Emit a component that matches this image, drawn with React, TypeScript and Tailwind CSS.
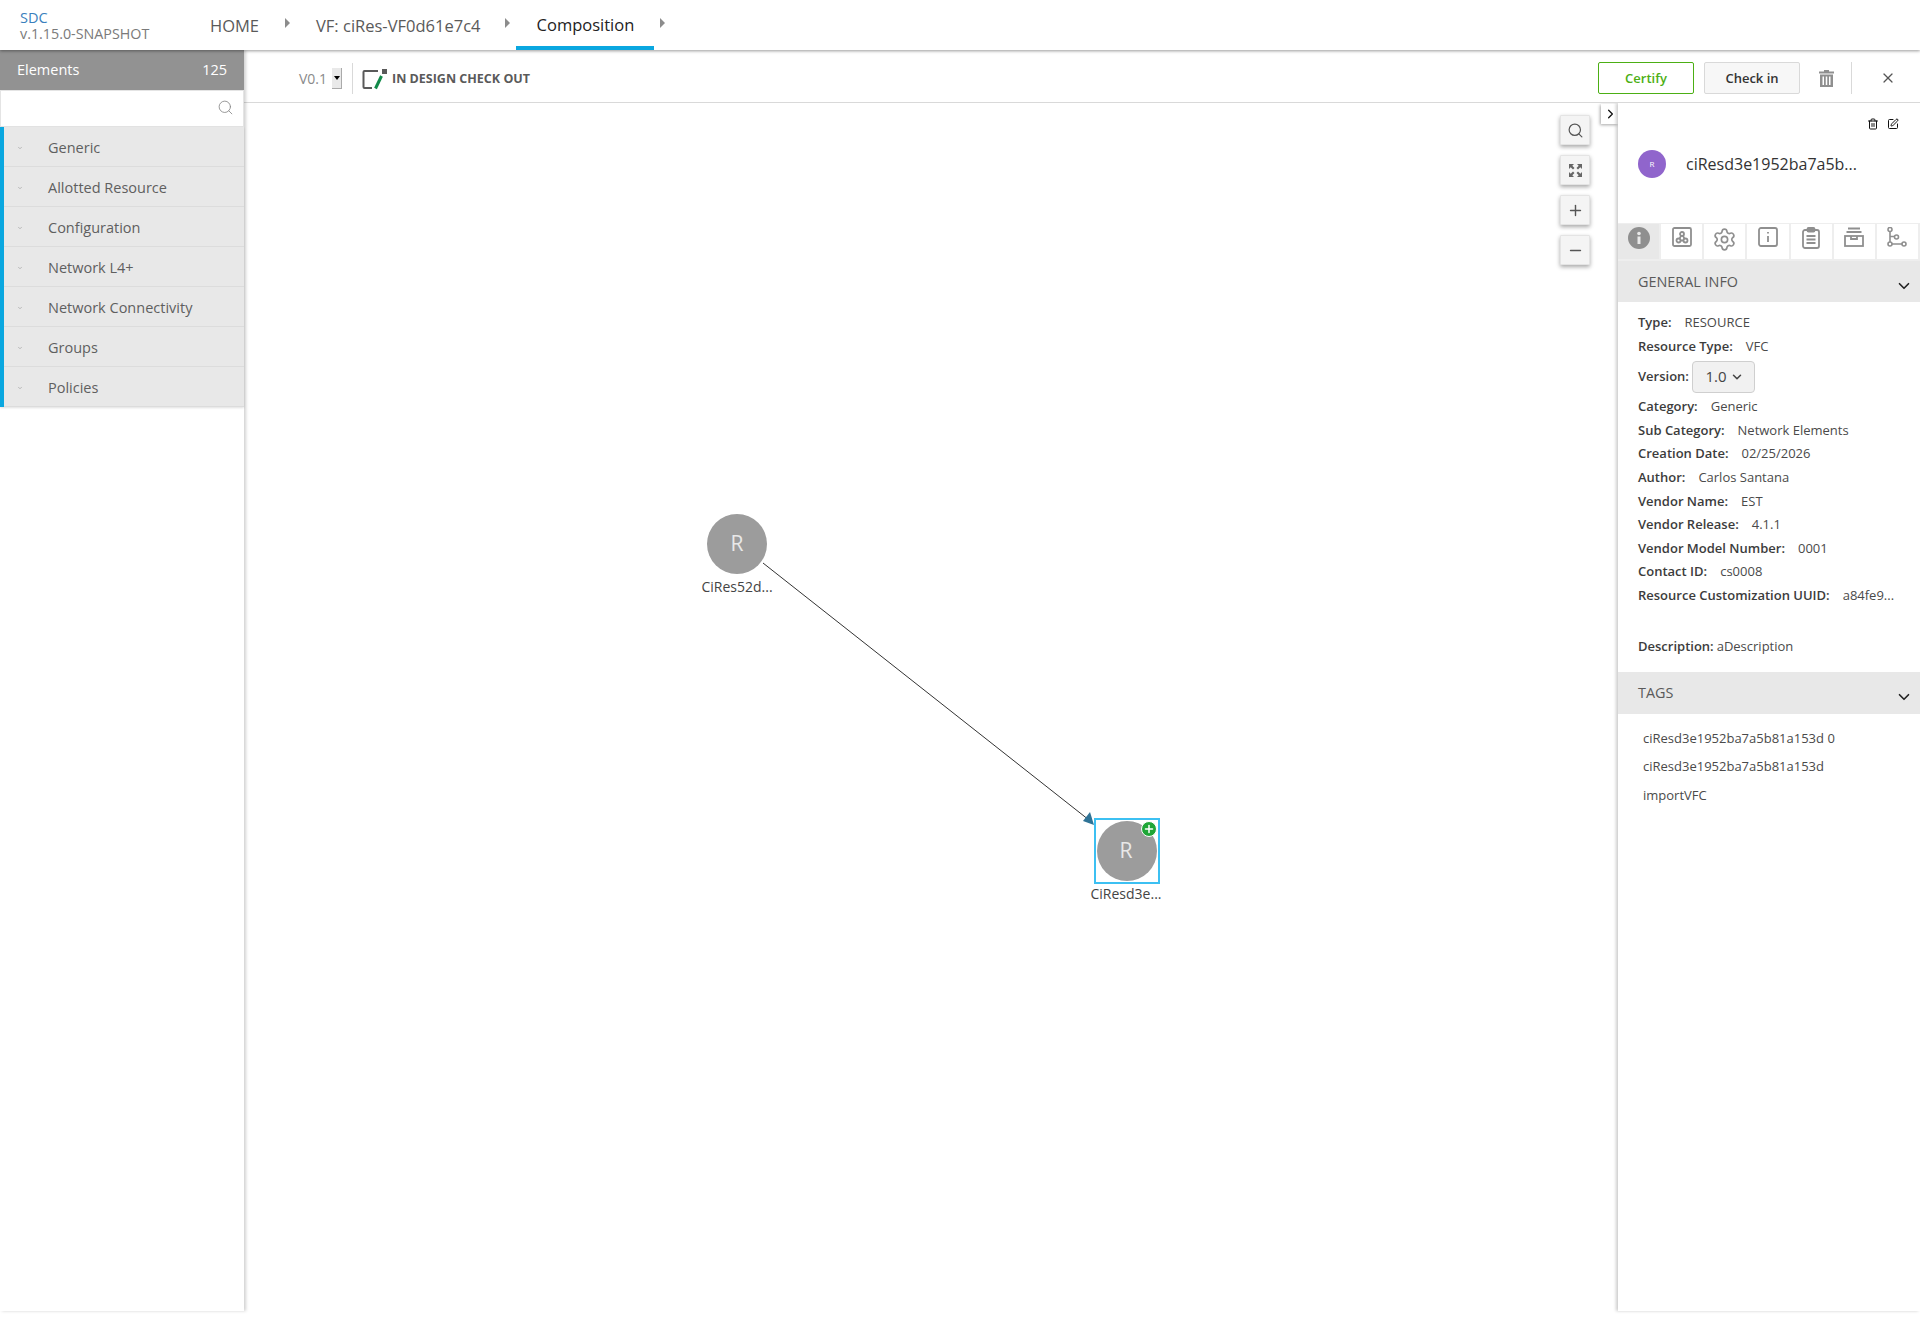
import { ChevronDown, ChevronRight, Minus, Plus, Search, Settings, SquarePen, Trash2, X } from "lucide-react";

const categories = ["Generic", "Allotted Resource", "Configuration", "Network L4+", "Network Connectivity", "Groups", "Policies"];

const infoRows: [string, string][] = [
  ["Type:", "RESOURCE"],
  ["Resource Type:", "VFC"],
];

const infoRows2: [string, string][] = [
  ["Category:", "Generic"],
  ["Sub Category:", "Network Elements"],
  ["Creation Date:", "02/25/2026"],
  ["Author:", "Carlos Santana"],
  ["Vendor Name:", "EST"],
  ["Vendor Release:", "4.1.1"],
  ["Vendor Model Number:", "0001"],
  ["Contact ID:", "cs0008"],
  ["Resource Customization UUID:", "a84fe9..."],
];

function Caret() {
  return <span className="w-0 h-0 border-y-[5px] border-y-transparent border-l-[5px] border-l-[#8c8c8c] mb-1" />;
}

function InfoRow({ label, value }: { label: string; value: string }) {
  return (
    <div className="h-[23.6px] flex items-center whitespace-nowrap">
      <span className="font-semibold text-[#3c3c3c] mr-[13px]">{label}</span>
      <span className="text-[#4a4a4a]">{value}</span>
    </div>
  );
}

function ZoomButton({ children }: { children: React.ReactNode }) {
  return (
    <button className="w-[30px] h-[30px] flex items-center justify-center bg-[#f4f4f4] border border-[#e4e4e4] rounded-[1px] shadow-[0_2px_4px_rgba(0,0,0,0.35)] text-[#555]">
      {children}
    </button>
  );
}

function SectionHeader({ title, className }: { title: string; className: string }) {
  return (
    <div className={`bg-[#e8e8e8] flex items-center justify-between pl-5 pr-[7px] text-[14.4px] font-medium text-[#5a5a5a] ${className}`}>
      <span>{title}</span>
      <ChevronDown size={18} strokeWidth={2.2} className="text-[#222] mt-[8px]" />
    </div>
  );
}

function Tab({ active, children }: { active?: boolean; children: React.ReactNode }) {
  return (
    <div className={`flex-1 flex items-start justify-center pt-[3px] text-[#8f8f8f] border-r-2 border-[#eeeeee] ${active ? "bg-[#e8e8e8]" : "bg-white"}`}>
      {children}
    </div>
  );
}

export default function App() {
  return (
    <div className="w-[1920px] h-[1319px] bg-white overflow-hidden font-['Open_Sans',sans-serif] flex flex-col">
      {/* top nav */}
      <div className="relative z-30 h-[50px] shrink-0 flex bg-white shadow-[0_1px_3px_rgba(0,0,0,0.4)]">
        <div className="w-[210px] pl-5 pt-[10px] leading-[16px]">
          <div className="text-[14.5px] text-[#3a7fbd]">SDC</div>
          <div className="text-[14.3px] text-[#7a7a7a] whitespace-nowrap">v.1.15.0-SNAPSHOT</div>
        </div>
        <div className="flex items-center text-[16.5px] text-[#5a5a5a] h-full">
          <span className="pt-[3px]">HOME</span>
          <span className="ml-[26px] mr-[26px] flex"><Caret /></span>
          <span className="pt-[3px]">VF: ciRes-VF0d61e7c4</span>
          <span className="ml-[25px] mr-[6px] flex"><Caret /></span>
          <span className="w-[138px] h-full pt-[5px] flex items-center justify-center text-[#222] border-b-4 border-[#0aa7e0]">Composition</span>
          <span className="ml-[6px] flex"><Caret /></span>
        </div>
      </div>

      <div className="flex h-[1261px]">
        {/* palette */}
        <div className="relative z-20 w-[244px] shrink-0 bg-white shadow-[2px_0_3px_rgba(0,0,0,0.18)]">
          <div className="h-10 bg-[#929292] flex items-center justify-between px-[17px] text-[14.5px] font-medium text-white">
            <span>Elements</span>
            <span>125</span>
          </div>
          <div className="h-[37px] border border-[#e4e4e4] flex items-center justify-end pr-[9px] pb-[2px]">
            <Search size={17} strokeWidth={1.2} className="text-[#888]" />
          </div>
          <div className="border-l-4 border-[#0aa7e0] shadow-[0_1px_2px_rgba(0,0,0,0.12)]">
            {categories.map((c) => (
              <div key={c} className="h-10 bg-[#e8e8e8] border-b border-[#dcdcdc] flex items-center pt-[2px] text-[14.5px] font-medium text-[#5f5f5f]">
                <span className="w-[44px] pl-[13px] flex"><ChevronDown size={6} strokeWidth={2} className="text-[#888]" /></span>
                <span>{c}</span>
              </div>
            ))}
          </div>
        </div>

        {/* middle */}
        <div className="flex-1 min-w-0 flex flex-col">
          <div className="h-[53px] shrink-0 border-b border-[#d9d9d9] pt-[5px] flex items-center relative z-10 bg-white">
            <span className="ml-[55px] text-[14px] text-[#8a8a8a]">V0.1</span>
            <span className="ml-[5px] w-[10px] h-[21px] bg-[#e9e9e9] border-r border-b border-[#aaa] flex items-center justify-center">
              <span className="w-0 h-0 border-x-[3px] border-x-transparent border-t-[4px] border-t-black" />
            </span>
            <span className="ml-[10px] w-px h-[31px] bg-[#d9d9d9]" />
            <svg width="26" height="22" viewBox="0 0 26 22" className="ml-[9px]" fill="none">
              <path d="M16 3H2.500a1 1 0 0 0-1 1v15a1 1 0 0 0 1 1H10" stroke="#5a5a5a" strokeWidth="2" />
              <rect x="20" y="1" width="5" height="5" fill="#5a5a5a" />
              <path d="M19.500 8 13.500 20.500" stroke="#128a4a" strokeWidth="3" />
            </svg>
            <span className="ml-[4px] pt-[1px] text-[12.5px] font-bold text-[#5a5a5a]">IN DESIGN CHECK OUT</span>
            <div className="ml-auto flex items-center -mt-[1px]">
              <button className="w-[96px] h-8 pt-[1px] border border-[#4caf14] rounded-[2px] text-[13px] font-semibold text-[#4caf14]">Certify</button>
              <button className="ml-[10px] w-[96px] h-8 pt-[1px] border border-[#d9d9d9] rounded-[2px] bg-[#f7f7f7] text-[13px] font-semibold text-[#333]">Check in</button>
              <svg width="15" height="17" viewBox="0 0 15 17" className="ml-[19px]" fill="#8f8f8f">
                <path d="M5 0h5v1.500h5V3.500H0V1.500h5zM1 4.500h13V17H1zM3.500 6.500v8.500h1.500V6.500zM6.750 6.500v8.500h1.500V6.500zM10 6.500v8.500h1.500V6.500z" fillRule="evenodd" />
              </svg>
              <span className="ml-[17px] w-px h-8 bg-[#d9d9d9]" />
              <X size={16} strokeWidth={1.8} className="ml-[28px] mr-[24px] text-[#555]" />
            </div>
          </div>

          <div className="flex-1 flex min-h-0">
            {/* canvas */}
            <div className="relative flex-1 min-w-0">
              <svg className="absolute left-0 top-[-1px]" width="1374" height="800" fill="none">
                <path d="M519 461 845 718" stroke="#333" strokeWidth="1" />
                <path d="M850 723 839 719 846 710Z" fill="#2f7396" />
              </svg>

              {/* first node */}
              <div className="absolute left-[463px] top-[411px] w-[60px] h-[60px] rounded-full bg-[#9c9c9c] flex items-center justify-center text-[21px] text-[#e8e8e8]">R</div>
              <div className="absolute left-[443px] top-[473px] w-[100px] text-center text-[14px] text-[#444]">CiRes52d...</div>

              {/* selected node */}
              <div className="absolute left-[850px] top-[715px] w-[66px] h-[66px] border-2 border-[#3cc0f2]">
                <div className="absolute left-[1px] top-[1px] w-[60px] h-[60px] pr-[2px] rounded-full bg-[#9c9c9c] flex items-center justify-center text-[21px] text-[#e8e8e8]">R</div>
                <div className="absolute right-[1px] top-[1px] w-[16px] h-[16px] rounded-full bg-[#1fa637] border border-white flex items-center justify-center">
                  <Plus size={12} strokeWidth={3} className="text-white" />
                </div>
              </div>
              <div className="absolute left-[832px] top-[780px] w-[100px] text-center text-[14px] text-[#444]">CiResd3e...</div>

              <div className="absolute right-[28px] top-[12px] flex flex-col gap-[10px]">
                <ZoomButton><Search size={17} strokeWidth={1.7} /></ZoomButton>
                <ZoomButton>
                  <svg width="15" height="15" viewBox="0 0 15 15" fill="#666">
                    <path d="M1 1h5L4.300 2.700 6.500 5 5 6.500 2.700 4.300 1 6zM14 1v5l-1.700-1.700L10 6.500 8.500 5l2.200-2.300L9 1zM1 14V9l1.700 1.700L5 8.500 6.500 10l-2.200 2.300L6 14zM14 14H9l1.700-1.700L8.500 10 10 8.500l2.300 2.200L14 9z" />
                  </svg>
                </ZoomButton>
                <ZoomButton><Plus size={17} strokeWidth={2} /></ZoomButton>
                <ZoomButton><Minus size={17} strokeWidth={2} /></ZoomButton>
              </div>
              <div className="absolute right-0 top-[1px] w-[17px] h-5 bg-white shadow-[-1px_1px_3px_rgba(0,0,0,0.35)] flex items-center justify-center">
                <ChevronRight size={16} strokeWidth={2} className="text-[#111] ml-[2px]" />
              </div>
            </div>

            {/* right panel */}
            <div className="relative w-[302px] shrink-0 bg-white shadow-[-2px_0_3px_rgba(0,0,0,0.2)] flex flex-col">
              <div className="h-[120px] shrink-0 relative">
                <div className="flex justify-end gap-[8px] pr-[21px] pt-[15px] text-[#111]">
                  <Trash2 size={12} strokeWidth={2} />
                  <SquarePen size={12} strokeWidth={2} />
                </div>
                <div className="flex items-center mt-[20px] pl-5">
                  <span className="w-7 h-7 rounded-full bg-[#9065cc] flex items-center justify-center text-[8px] text-white">R</span>
                  <span className="ml-[20px] text-[16px] text-[#333] whitespace-nowrap">ciResd3e1952ba7a5b...</span>
                </div>
              </div>

              <div className="h-[38px] shrink-0 flex border-t border-b-2 border-[#eeeeee]">
                <Tab active>
                  <svg width="22" height="22" viewBox="0 0 22 22">
                    <circle cx="11" cy="11" r="11" fill="#8f8f8f" />
                    <rect x="9.500" y="9.500" width="3" height="7.500" fill="#e8e8e8" />
                    <circle cx="11" cy="6.500" r="1.800" fill="#e8e8e8" />
                  </svg>
                </Tab>
                <Tab>
                  <svg width="20" height="20" viewBox="0 0 20 20" fill="none" stroke="currentColor" strokeWidth="1.800">
                    <rect x="1" y="1" width="18" height="18" rx="1.500" />
                    <circle cx="10" cy="7" r="2" />
                    <circle cx="6.500" cy="13.500" r="2" />
                    <circle cx="13.500" cy="13.500" r="2" />
                    <path d="M9 8.800 7.500 11.700M11 8.800l1.500 2.900M8.500 13.500h3" />
                  </svg>
                </Tab>
                <Tab><Settings size={25} strokeWidth={1.6} /></Tab>
                <Tab>
                  <svg width="20" height="20" viewBox="0 0 20 20" fill="none" stroke="currentColor" strokeWidth="1.800">
                    <rect x="1" y="1" width="18" height="18" rx="2" />
                    <path d="M10 9v6M10 5v1.500" />
                  </svg>
                </Tab>
                <Tab>
                  <svg width="18" height="22" viewBox="0 0 18 22" fill="none" stroke="currentColor" strokeWidth="1.800">
                    <rect x="1" y="3" width="16" height="18" rx="2" />
                    <rect x="5.500" y="1" width="7" height="3.500" rx="1" />
                    <path d="M4.500 9h9M4.500 12.500h9M4.500 16h9" />
                  </svg>
                </Tab>
                <Tab>
                  <svg width="20" height="20" viewBox="0 0 20 20" fill="none" stroke="currentColor" strokeWidth="1.800">
                    <path d="M4 1.500h12M2.500 5h15" />
                    <rect x="1" y="9" width="18" height="10" />
                    <path d="M7 9v3h6V9" />
                  </svg>
                </Tab>
                <Tab>
                  <svg width="20" height="20" viewBox="0 0 20 20" fill="none" stroke="currentColor" strokeWidth="1.600">
                    <circle cx="3" cy="2.500" r="2" />
                    <circle cx="3" cy="17" r="2" />
                    <circle cx="9.500" cy="10" r="2" />
                    <circle cx="17" cy="17" r="2" />
                    <path d="M3 4.500v10.500M3 9.500h4.500M5 17h10" />
                  </svg>
                </Tab>
              </div>

              <SectionHeader title="GENERAL INFO" className="h-[41px] shrink-0" />

              <div className="pl-5 pt-[9px] text-[13px]">
                {infoRows.map(([l, v]) => <InfoRow key={l} label={l} value={v} />)}
                <div className="h-[37px] flex items-center">
                  <span className="font-semibold text-[#3c3c3c] mr-[3px]">Version:</span>
                  <span className="w-[63px] h-8 pl-[3px] border border-[#cfcfcf] rounded-[4px] bg-[#f1f1f1] flex items-center justify-center gap-[4px] text-[15px] text-[#444]">
                    1.0 <ChevronDown size={14} strokeWidth={2.6} />
                  </span>
                </div>
                {infoRows2.map(([l, v]) => <InfoRow key={l} label={l} value={v} />)}
                <div className="mt-[27px] h-6 flex items-center">
                  <span className="font-semibold text-[#3c3c3c] mr-[3px]">Description:</span>
                  <span className="text-[#4a4a4a]">aDescription</span>
                </div>
              </div>

              <SectionHeader title="TAGS" className="h-[42px] shrink-0 mt-[13px]" />

              <div className="pl-[25px] pt-[10px] text-[13px] text-[#4a4a4a] leading-[28.500px]">
                <div>ciResd3e1952ba7a5b81a153d 0</div>
                <div>ciResd3e1952ba7a5b81a153d</div>
                <div>importVFC</div>
              </div>
            </div>
          </div>
        </div>
      </div>
    </div>
  );
}
